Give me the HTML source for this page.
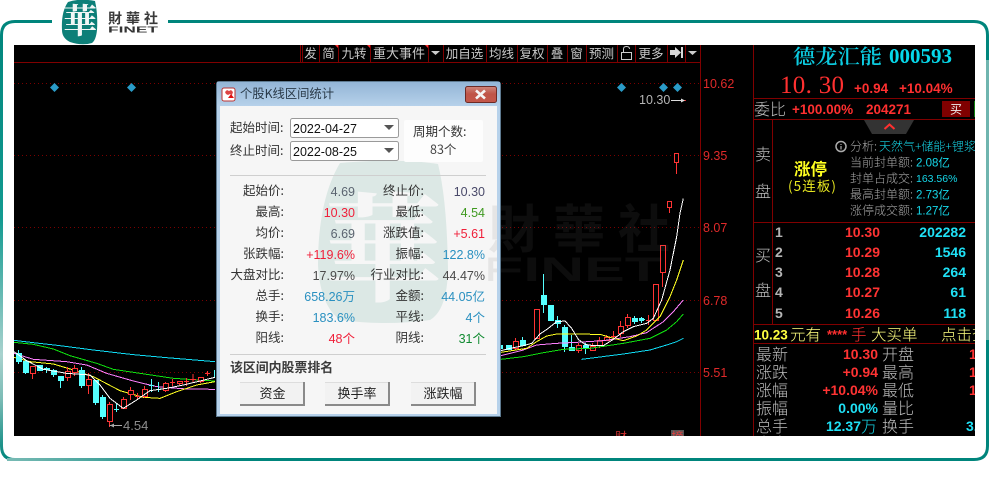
<!DOCTYPE html>
<html><head><meta charset="utf-8">
<style>
html,body{margin:0;padding:0;background:#fff;width:989px;height:481px;overflow:hidden}
svg{display:block}
text{font-family:"Liberation Sans","Noto Sans CJK SC",sans-serif}
.c{font-family:"Noto Sans CJK SC","Liberation Sans",sans-serif}
.gr{fill:#bdbdbd;font-size:16px;font-family:"Noto Sans CJK SC",sans-serif;font-weight:300}
.tb{fill:#c8c8c8;font-size:12.5px;text-anchor:middle;font-family:"Noto Sans CJK SC",sans-serif}
.ax{fill:#e02a2a;font-size:12.5px}
.rb{fill:#ff3333;font-size:14px;font-weight:bold;text-anchor:end;font-family:"Liberation Sans",sans-serif}
.cb{fill:#1fe0f5;font-size:14px;font-weight:bold;text-anchor:end;font-family:"Liberation Sans",sans-serif}
.sm{fill:#a8a8a8;font-size:12px;font-family:"Noto Sans CJK SC",sans-serif;font-weight:300}
.sv{fill:#16d8ea;font-size:11.5px;font-family:"Liberation Sans","Noto Sans CJK SC",sans-serif}
.l{fill:#333;font-size:12.5px;text-anchor:end;font-family:"Noto Sans CJK SC",sans-serif}
.v{font-size:12.5px;text-anchor:end;font-family:"Liberation Sans","Noto Sans CJK SC",sans-serif}
.btn{fill:#222;font-size:13px;text-anchor:middle;font-family:"Noto Sans CJK SC",sans-serif}
.w{stroke:#fff}.y{stroke:#ffff22}.m{stroke:#ff80ff}.g{stroke:#10e010}.b{stroke:#10dcf5}
.ln polyline{fill:none;stroke-width:3;shape-rendering:crispEdges}
.cy rect{fill:#55ffff;stroke:none}.cy path{stroke:#55ffff;fill:none}
.rd rect{fill:#000;stroke:#ff3333}.rd path{stroke:#ff3333;fill:none}
.cy,.rd{shape-rendering:crispEdges}
.dv path{stroke:#800000;fill:none;shape-rendering:crispEdges}
</style></head>
<body>
<svg width="989" height="481" viewBox="0 0 989 481" xmlns="http://www.w3.org/2000/svg">
<defs>
<linearGradient id="fl" x1="0" y1="20" x2="0" y2="460" gradientUnits="userSpaceOnUse">
<stop offset="0" stop-color="#00857c"/><stop offset=".45" stop-color="#129a90"/><stop offset=".76" stop-color="#a8d2ce"/><stop offset=".86" stop-color="#7cbcb6"/><stop offset="1" stop-color="#00857c"/></linearGradient>
<linearGradient id="fb" x1="0" y1="0" x2="230" y2="0" gradientUnits="userSpaceOnUse">
<stop offset="0" stop-color="#7cbcb6"/><stop offset="1" stop-color="#00857c"/></linearGradient>
<linearGradient id="tt" x1="0" y1="82" x2="0" y2="106" gradientUnits="userSpaceOnUse">
<stop offset="0" stop-color="#93b5d6"/><stop offset="1" stop-color="#b6d1ea"/></linearGradient>
<linearGradient id="cl" x1="0" y1="86" x2="0" y2="102" gradientUnits="userSpaceOnUse">
<stop offset="0" stop-color="#d08a80"/><stop offset=".5" stop-color="#bf5447"/><stop offset="1" stop-color="#c4574a"/></linearGradient>
<clipPath id="rp"><rect x="753" y="45" width="222" height="391"/></clipPath>
<clipPath id="ch"><rect x="14" y="45" width="686" height="391"/></clipPath>
<clipPath id="dl"><rect x="220" y="106" width="277" height="308"/></clipPath>
</defs>

<!-- frame -->
<path d="M52 21.5H15Q1.5 21.5 1.5 35V446Q1.5 459.5 15 459.5H300" fill="none" stroke="url(#fl)" stroke-width="3"/>
<path d="M7 459.5H230" fill="none" stroke="url(#fb)" stroke-width="3"/>
<path d="M168 21.5H974Q987.500 21.500 987.500 35V446Q987.500 459.500 974 459.500H230" fill="none" stroke="#00857c" stroke-width="3"/>
<path d="M987.500 60V340" fill="none" stroke="#6fb5af" stroke-width="3"/>

<!-- logo -->
<path d="M68 2Q80 -2 95 1Q98 14 97 30Q96 40 92 43Q82 46 70 42Q62 38 62 30Q61 12 68 2Z" fill="#0d7f78"/>
<text x="80" y="33" text-anchor="middle" style="font-family:'Noto Serif CJK SC',serif;font-size:34px;font-weight:700" fill="#f2f7f6">華</text>
<text x="108" y="23.500" style="font-family:'Noto Sans CJK TC',sans-serif;font-size:14px;font-weight:700" fill="#3a3a3a" textLength="50">財華社</text>
<text x="108" y="32.500" style="font-size:8.500px;font-weight:bold" fill="#333" textLength="50" lengthAdjust="spacingAndGlyphs">FINET</text>

<!-- black panel -->
<rect x="14" y="45" width="961" height="391" fill="#000"/>

<!-- chart -->
<g clip-path="url(#ch)">
<g stroke="#7a0000" stroke-dasharray="1 3" shape-rendering="crispEdges">
<path d="M14 83.500H700M14 155.500H700M14 227.500H700M14 300.500H700M14 372.500H700"/>
</g>
<!-- left MAs -->
<g class="ln" transform="translate(0,320) scale(.33333)">
<polyline class="b" points="42,61 100,68 180,77 280,90 400,104 500,113 645,125"/>
<polyline class="g" points="42,67 100,73 160,87 210,107 290,130 340,148 420,160 520,175 645,183"/>
<polyline class="m" points="42,100 100,118 200,125 260,135 320,160 400,183 470,200 560,207 645,208"/>
<polyline class="y" points="42,112 90,125 160,132 220,150 280,170 360,212 430,232 480,235 530,215 590,195 645,185"/>
</g>
<!-- left candles -->
<g class="cy">
<path d="M18.500 350V364M25.500 360V374M46.500 367V373M53.500 369V377M60.500 376V388M81.500 367V388M95.500 380V405M102.500 395V419M116.500 403V412M114 409.500H119M151.500 379V392M149 385.500H154M158.500 382V392M156 389.500H161M214.500 370V378"/>
<rect x="16" y="353" width="6" height="9"/><rect x="23" y="361" width="6" height="12"/><rect x="37" y="365" width="6" height="6"/><rect x="44" y="368" width="6" height="2"/><rect x="51" y="370" width="6" height="5"/><rect x="58" y="376" width="6" height="5"/><rect x="79" y="370" width="6" height="16"/><rect x="93" y="380" width="6" height="23"/><rect x="100" y="397" width="6" height="20"/>
</g>
<g class="rd">
<path d="M32.500 366V379M67.500 367V381M74.500 365V376M88.500 373V394M109.500 402V427M123.500 397V409M130.500 387V400M137.500 393V399M135 396.500H140M144.500 386V398M165.500 382V392M172.500 379V386M170 382.500H175M179.500 381V385M186.500 378V386M184 381.500H189M193 374V382M190 379.500H196M200.500 377V383M207.500 371V376M205 373.500H210"/>
<rect x="30.500" y="366.500" width="5" height="7"/><rect x="65.500" y="371.500" width="5" height="6"/><rect x="72.500" y="368.500" width="5" height="4"/><rect x="86.500" y="379.500" width="5" height="6"/><rect x="107.500" y="404.500" width="5" height="17"/><rect x="121.500" y="399.500" width="5" height="9"/><rect x="128.500" y="390.500" width="5" height="4"/><rect x="142.500" y="389.500" width="5" height="7"/><rect x="163.500" y="383.500" width="5" height="7"/><rect x="177.500" y="381.500" width="5" height="2"/><rect x="198.500" y="377.500" width="5" height="4"/>
</g>
<path d="M109.500 425.500H122" stroke="#aaa" fill="none"/><path d="M110 425.500l4-2v4z" fill="#aaa"/>
<g class="ln" transform="translate(0,320) scale(.33333)"><polyline class="w" points="42,95 80,122 130,148 200,160 270,165 300,195 330,235 370,265 410,240 450,212 500,205 550,195 600,183 645,172"/></g>
<text x="123" y="430" fill="#8d8d8d" style="font-size:13px">4.54</text>

<!-- right candles -->
<g class="cy">
<path d="M522.500 337V346M543.500 274V313M557.500 316V328M564.500 325V352M571.500 335V351M585.500 343V354M634.500 316V324M641.500 317V323M639 319.500H645"/>
<rect x="501" y="345" width="2" height="4"/><rect x="506" y="345" width="6" height="5"/><rect x="520" y="340" width="6" height="6"/><rect x="541" y="295" width="6" height="10"/><rect x="548" y="305" width="6" height="16"/><rect x="555" y="320" width="6" height="4"/><rect x="562" y="327" width="6" height="20"/><rect x="569" y="347" width="6" height="4"/><rect x="583" y="345" width="6" height="3"/><rect x="632" y="318" width="6" height="4"/><rect x="639" y="318" width="5" height="3"/>
</g>
<g class="rd">
<path d="M515.500 338V350M578.500 343V353M592.500 343V351M599.500 337V348M606.500 335V341M613.500 331V340M611 336.500H617M620.500 321V337M627.500 314V328M648.500 315V325M646 320.500H651M662.500 272V287M669.500 207V213M676.500 162V174"/>
<rect x="513.500" y="341.500" width="5" height="7"/><rect x="534.500" y="309.500" width="5" height="29"/><rect x="576.500" y="345.500" width="5" height="5"/><rect x="590.500" y="346.500" width="5" height="4"/><rect x="597.500" y="340.500" width="5" height="5"/><rect x="604.500" y="337.500" width="5" height="3"/><rect x="618.500" y="326.500" width="5" height="7"/><rect x="625.500" y="317.500" width="5" height="8"/><rect x="653.500" y="284.500" width="5" height="36"/><rect x="660.500" y="245.500" width="5" height="27"/><rect x="667.500" y="201.500" width="4" height="6"/><rect x="674.500" y="153.500" width="4" height="9"/>
</g>
<g class="ln" transform="translate(490,180) scale(.33333)">
<polyline class="b" points="275,538 400,522 480,510 530,495 560,485 580,475"/>
<polyline class="g" points="33,538 100,530 160,518 220,508 300,505 400,490 480,475 530,450 560,425 580,402"/>
<polyline class="m" points="33,527 100,510 140,495 200,490 260,487 340,482 420,470 470,458 520,425 550,395 580,360"/>
<polyline class="y" points="33,517 110,505 140,485 170,468 200,462 330,463 360,472 400,482 440,468 470,450 510,410 540,350 560,300 580,240"/>
<polyline class="w" points="33,512 60,505 100,497 125,490 150,462 175,445 200,425 225,423 245,445 265,478 285,493 310,497 340,497 370,478 400,455 430,440 470,430 490,415 515,360 540,270 560,170 570,100 580,55"/>
</g>
<!-- diamonds -->
<g fill="#2a9bc8"><path d="M54.500 83l4.500 4.500-4.500 4.500-4.500-4.500z"/><path d="M131.500 83l4.500 4.500-4.500 4.500-4.500-4.500z"/><path d="M621.500 83l4.500 4.500-4.500 4.500-4.500-4.500z"/><path d="M663.500 83l4.500 4.500-4.500 4.500-4.500-4.500z"/><path d="M677.500 83l4.500 4.500-4.500 4.500-4.500-4.500z"/></g>
<text x="639" y="104" fill="#b5b5b5" style="font-size:12.500px">10.30</text>
<path d="M671 100.500H682" stroke="#ddd"/><path d="M682 100.500H686" stroke="#e03030"/><path d="M685 100.500l-4-2v4z" fill="#ddd"/>
<!-- bottom marks -->
<text x="615" y="441" fill="#d03030" style="font-size:12px">财</text>
<rect x="671" y="430" width="13" height="6" fill="#555"/>
<text x="671.500" y="441" fill="#e04040" style="font-size:12px">摘</text>
</g>

<!-- toolbar -->
<g class="dv"><path d="M14 62.500H700.500M700.500 45V436M300.500 45V62M302.500 45V62M319.500 45V62M338.500 45V62M370.500 45V62M428.500 45V62M443.500 45V62M486.500 45V62M517.500 45V62M547.500 45V62M567.500 45V62M586.500 45V62M617.500 45V62M635.500 45V62M667.500 45V62M685.500 45V62"/></g>
<g class="tb">
<text class="tb" x="310.500" y="58">发</text><text class="tb" x="328.500" y="58">简</text><text class="tb" x="354" y="58">九转</text><text class="tb" x="399" y="58" style="font-size:13px">重大事件</text><text class="tb" x="464.500" y="58">加自选</text><text class="tb" x="501.500" y="58">均线</text><text class="tb" x="532" y="58">复权</text><text class="tb" x="557" y="58">叠</text><text class="tb" x="576.500" y="58">窗</text><text class="tb" x="601.500" y="58">预测</text><text class="tb" x="651" y="58">更多</text>
</g>
<path d="M335 45h3v3zM367 45h3v3zM425 45h3v3z" fill="#ff3030"/>
<path d="M431 51h9l-4.500 4z" fill="#ccc"/><path d="M688 51h9l-4.500 4z" fill="#ccc"/>
<rect x="621.500" y="52.500" width="10" height="7" fill="none" stroke="#ccc"/><path d="M623.500 52V49Q623.500 46.500 626.500 46.500 629.500 46.500 629.500 49" fill="none" stroke="#ccc"/>
<path d="M670 50h5v-3l6 5.500-6 5.500v-3h-5z" fill="#d8d8d8"/><path d="M682 47v11" stroke="#d8d8d8" stroke-width="2"/>
<!-- axis labels -->
<text class="ax" x="703" y="88">10.62</text><text class="ax" x="703" y="160">9.35</text><text class="ax" x="703" y="232">8.07</text><text class="ax" x="703" y="305">6.78</text><text class="ax" x="703" y="377">5.51</text>

<!-- watermark on chart -->
<g fill="#808080" fill-opacity=".1">
<text x="488" y="248" class="c" style="font-family:'Noto Sans CJK TC',sans-serif;font-size:52px;font-weight:700;letter-spacing:13px">財華社</text>
<text x="486" y="281" style="font-size:34px;font-weight:bold" textLength="176" lengthAdjust="spacingAndGlyphs">FINET</text>
</g>

<!-- right panel -->
<g clip-path="url(#rp)">
<text x="793" y="63.500" fill="#0ccbe0" style="font-family:'Noto Serif CJK SC',serif;font-size:20px;font-weight:600" textLength="89" lengthAdjust="spacingAndGlyphs">德龙汇能</text>
<text x="889" y="63" fill="#06d8ea" style="font-family:'Liberation Serif',serif;font-size:21px;font-weight:bold">000593</text>
<text x="780" y="93" fill="#ff3030" style="font-family:'Liberation Serif',serif;font-size:25px;letter-spacing:.3px">10. 30</text>
<text x="854" y="93" fill="#ff3030" style="font-size:13.500px;font-weight:bold">+0.94</text>
<text x="899" y="93" fill="#ff3030" style="font-size:13.500px;font-weight:bold">+10.04%</text>
<g class="dv"><path d="M753.500 45V436M753 98.500H975M753 119.500H975M772.500 119V324M753 222.500H975M753 324.500H975M753 343.500H975"/></g>
<text class="gr" x="754" y="115">委比</text>
<text x="792" y="114" fill="#ff3030" style="font-size:13.500px;font-weight:bold">+100.00%</text>
<text x="866" y="114" fill="#ff3030" style="font-size:13.500px;font-weight:bold">204271</text>
<rect x="942" y="101" width="28" height="16" fill="#800000"/>
<text x="956" y="113.500" text-anchor="middle" class="c" fill="#eee" style="font-size:12px">买</text>
<rect x="974" y="101" width="2" height="16" fill="#108010"/>
<path d="M864 120H914L906 134H872Z" fill="#333"/>
<path d="M884.500 129l5-4.500 5 4.500" fill="none" stroke="#ff3030" stroke-width="2"/>
<text class="gr" x="755" y="160">卖</text><text class="gr" x="755" y="197">盘</text>
<text class="gr" x="755" y="261">买</text><text class="gr" x="755" y="296">盘</text>
<text x="794" y="175" class="c" fill="#ffff20" style="font-size:16.500px;font-weight:700">涨停</text>
<text x="788" y="191" class="c" fill="#e8e820" style="font-size:13.500px" textLength="48">(5连板)</text>
<circle cx="841" cy="146.500" r="5" fill="none" stroke="#aaa" stroke-width="1.500"/><path d="M841 144v1M841 146v3.500" stroke="#ccc"/>
<text class="sm" x="850" y="150.500">分析:</text>
<text x="879" y="150.500" class="c" fill="#16d8ea" style="font-size:12px;font-weight:300">天然气+储能+锂浆</text>
<text class="sm" x="850" y="166.500">当前封单额:</text><text class="sv" x="916" y="166.500">2.08亿</text>
<text class="sm" x="850" y="182.500">封单占成交:</text><text class="sv" x="916" y="182" style="font-size:10.500px">163.56%</text>
<text class="sm" x="850" y="198.500">最高封单额:</text><text class="sv" x="916" y="198.500">2.73亿</text>
<text class="sm" x="850" y="214.500">涨停成交额:</text><text class="sv" x="916" y="214.500">1.27亿</text>
<g fill="#b5b5b5" style="font-size:14px;font-weight:bold"><text x="775" y="237">1</text><text x="775" y="257">2</text><text x="775" y="277">3</text><text x="775" y="297">4</text><text x="775" y="318">5</text></g>
<text class="rb" x="880" y="237">10.30</text><text class="rb" x="880" y="257">10.29</text><text class="rb" x="880" y="277">10.28</text><text class="rb" x="880" y="297">10.27</text><text class="rb" x="880" y="318">10.26</text>
<text class="cb" x="966" y="237">202282</text><text class="cb" x="966" y="257">1546</text><text class="cb" x="966" y="277">264</text><text class="cb" x="966" y="297">61</text><text class="cb" x="966" y="318">118</text>
<text x="754" y="339.500" fill="#ffff40" style="font-size:13.500px;font-weight:bold">10.23</text>
<text x="790" y="340" class="c" fill="#ffff80" style="font-size:15.500px;font-weight:300">元有</text>
<text x="827" y="339" fill="#ff3030" style="font-size:13px;font-weight:bold">****</text>
<text x="851" y="340" class="c" fill="#ff3030" style="font-size:15.500px;font-weight:300">手</text>
<text x="871" y="340" class="c" fill="#ffff80" style="font-size:15.500px;font-weight:300">大买单</text>
<text x="941" y="340" class="c" fill="#ffff80" style="font-size:15.500px;font-weight:300">点击查</text>
<text class="gr" x="756" y="360">最新</text><text class="gr" x="756" y="378">涨跌</text><text class="gr" x="756" y="396">涨幅</text><text class="gr" x="756" y="414">振幅</text><text class="gr" x="756" y="432">总手</text><text class="gr" x="756" y="449">内盘</text>
<text class="rb" x="878" y="359">10.30</text><text class="rb" x="878" y="377">+0.94</text><text class="rb" x="878" y="395">+10.04%</text><text class="cb" x="878" y="413">0.00%</text><text class="cb" x="861" y="431">12.37</text>
<text x="861" y="432" class="c" fill="#16d8ea" style="font-size:16px;font-weight:300">万</text>
<text class="gr" x="882" y="360">开盘</text><text class="gr" x="882" y="378">最高</text><text class="gr" x="882" y="396">最低</text><text class="gr" x="882" y="414">量比</text><text class="gr" x="882" y="432">换手</text>
<text x="969" y="359" fill="#ff3030" style="font-size:14px;font-weight:bold">1</text><text x="969" y="377" fill="#ff3030" style="font-size:14px;font-weight:bold">1</text><text x="969" y="395" fill="#ff3030" style="font-size:14px;font-weight:bold">1</text>
<text x="966" y="431" fill="#1fe0f5" style="font-size:14px;font-weight:bold">3.</text>
</g>

<!-- dialog -->
<path d="M219 81.500H497Q500.500 81.500 500.500 85V416.500H216.500V85Q216.500 81.500 219 81.500Z" fill="#b6d1ea" stroke="#5e7a90"/>
<rect x="217" y="82" width="283" height="24" fill="url(#tt)"/>
<rect x="220" y="106" width="277" height="308" fill="#f6f6f6"/>
<g clip-path="url(#dl)">
<path d="M340 163Q400 158 438 164Q447 200 448 270Q447 310 430 320Q385 326 340 320Q320 305 318 265Q318 200 340 163Z" fill="#dce8e5"/>
<text x="383" y="292" text-anchor="middle" style="font-family:'Noto Serif CJK SC',serif;font-size:118px;font-weight:700" fill="#f6f6f6">華</text>
<g fill="#808080" fill-opacity=".14">
<text x="488" y="248" style="font-family:'Noto Sans CJK TC',sans-serif;font-size:52px;font-weight:700">財</text>
<text x="486" y="281" style="font-size:34px;font-weight:bold">F</text>
</g>
</g>
<!-- title -->
<rect x="222" y="88" width="13" height="13" rx="2" fill="#fff" stroke="#b33" stroke-width="1"/>
<path d="M225 92l2-2 2 1 2-1 2 2-1 3-2-1-2 1-2-1z" fill="#d44"/><path d="M231 94l3 4h-6z" fill="#e01010"/>
<text x="240" y="98" class="c" fill="#2a3a48" style="font-size:12.300px">个股K线区间统计</text>
<rect x="465.500" y="86.500" width="31" height="16" rx="2" fill="url(#cl)" stroke="#6d2a25"/>
<path d="M476 90.500l9 8M485 90.500l-9 8" stroke="#f5f5f5" stroke-width="2.600"/>
<!-- form -->
<text x="230" y="132" class="l" style="text-anchor:start">起始时间:</text>
<text x="230" y="155" class="l" style="text-anchor:start">终止时间:</text>
<rect x="290.500" y="118.500" width="108" height="19" rx="2" fill="#fff" stroke="#9a9a9a"/>
<rect x="290.500" y="141.500" width="108" height="19" rx="2" fill="#fff" stroke="#9a9a9a"/>
<text x="293" y="133" fill="#111" style="font-size:12.500px">2022-04-27</text>
<text x="293" y="156" fill="#111" style="font-size:12.500px">2022-08-25</text>
<path d="M384 125h10l-5 5z" fill="#555"/><path d="M384 148h10l-5 5z" fill="#555"/>
<rect x="404" y="120" width="79" height="42" rx="2" fill="#fdfdfd"/>
<text x="413" y="136" class="c" fill="#333" style="font-size:12.500px">周期个数:</text>
<text x="430" y="154" class="c" fill="#444" style="font-size:12.500px">83个</text>
<path d="M230 175.500H486M230 354.500H486" stroke="#cfcfcf" shape-rendering="crispEdges"/>
<!-- rows -->
<text class="l" x="284" y="195">起始价:</text><text class="v" x="355" y="196" fill="#5b6470">4.69</text>
<text class="l" x="424" y="195">终止价:</text><text class="v" x="485" y="196" fill="#4a4a6a">10.30</text>
<text class="l" x="284" y="216">最高:</text><text class="v" x="355" y="217" fill="#f0203a">10.30</text>
<text class="l" x="424" y="216">最低:</text><text class="v" x="485" y="217" fill="#3f9a20">4.54</text>
<text class="l" x="284" y="237">均价:</text><text class="v" x="355" y="238" fill="#5b6470">6.69</text>
<text class="l" x="424" y="237">涨跌值:</text><text class="v" x="485" y="238" fill="#f0203a">+5.61</text>
<text class="l" x="284" y="258">张跌幅:</text><text class="v" x="355" y="259" fill="#f0203a">+119.6%</text>
<text class="l" x="424" y="258">振幅:</text><text class="v" x="485" y="259" fill="#2a90c0">122.8%</text>
<text class="l" x="284" y="279">大盘对比:</text><text class="v" x="355" y="280" fill="#4a4a4a">17.97%</text>
<text class="l" x="424" y="279">行业对比:</text><text class="v" x="485" y="280" fill="#4a4a4a">44.47%</text>
<text class="l" x="284" y="300">总手:</text><text class="v" x="355" y="301" fill="#2a90c0">658.26万</text>
<text class="l" x="424" y="300">金额:</text><text class="v" x="485" y="301" fill="#2a90c0">44.05亿</text>
<text class="l" x="284" y="321">换手:</text><text class="v" x="355" y="322" fill="#2a90c0">183.6%</text>
<text class="l" x="424" y="321">平线:</text><text class="v" x="485" y="322" fill="#2a90c0">4个</text>
<text class="l" x="284" y="342">阳线:</text><text class="v" x="355" y="343" fill="#f0203a">48个</text>
<text class="l" x="424" y="342">阴线:</text><text class="v" x="485" y="343" fill="#108a30">31个</text>
<text x="230" y="372" class="c" fill="#3a3a3a" style="font-size:12.900px;font-weight:700">该区间内股票排名</text>
<!-- buttons -->
<g shape-rendering="crispEdges">
<rect x="240" y="382" width="65" height="24" fill="#8a8a8a"/><rect x="240" y="382" width="63" height="22" fill="#f2f2f2"/><path d="M240 382.500H303" stroke="#ddd"/>
<rect x="325" y="382" width="65" height="24" fill="#8a8a8a"/><rect x="325" y="382" width="63" height="22" fill="#f2f2f2"/><path d="M325 382.500H388" stroke="#ddd"/>
<rect x="411" y="382" width="65" height="24" fill="#8a8a8a"/><rect x="411" y="382" width="63" height="22" fill="#f2f2f2"/><path d="M411 382.500H474" stroke="#ddd"/>
</g>
<text class="btn" x="272.500" y="398">资金</text><text class="btn" x="357" y="398">换手率</text><text class="btn" x="443" y="398">涨跌幅</text>
</svg>
</body></html>
